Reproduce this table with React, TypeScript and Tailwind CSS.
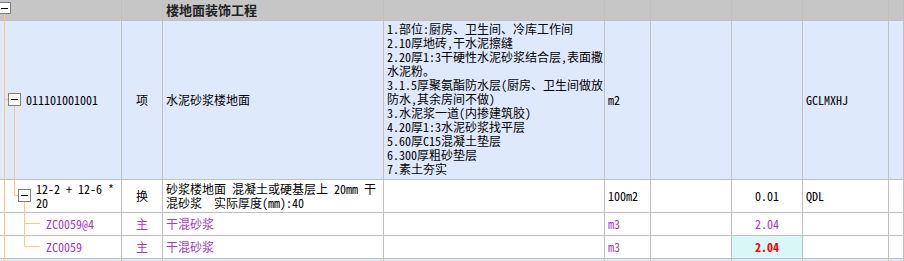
import React from "react";

const PURPLE = "text-[#a437c6]";

type CellProps = {
  children?: React.ReactNode;
  className?: string;
};

function Cell({ children, className = "" }: CellProps) {
  return (
    <div className={`flex items-center overflow-hidden whitespace-pre border-r border-b border-[#c0c0c0] ${className}`}>
      {children}
    </div>
  );
}

function Lines({ lines }: { lines: string[] }) {
  return (
    <div className="flex flex-col">
      {lines.map((l, i) => (
        <span key={i}>{l}</span>
      ))}
    </div>
  );
}

const description = [
  "1.部位:厨房、卫生间、冷库工作间",
  "2.10厚地砖,干水泥擦缝",
  "2.20厚1:3干硬性水泥砂浆结合层,表面撒",
  "水泥粉。",
  "3.1.5厚聚氨酯防水层(厨房、卫生间做放",
  "防水,其余房间不做)",
  "3.水泥浆一道(内掺建筑胶)",
  "4.20厚1:3水泥砂浆找平层",
  "5.60厚C15混凝土垫层",
  "6.300厚粗砂垫层",
  "7.素土夯实",
];

// tree connectors + collapse boxes in the code column
function TreeLines() {
  const line = "#ffc77d";
  return (
    <svg className="pointer-events-none absolute left-0 top-0" width="122" height="261">
      <g stroke={line} strokeWidth="1" fill="none">
        <path d="M4.5 14 V261" />
        <path d="M4 99.5 H8" />
        <path d="M14.5 106 V195.5 H18" />
        <path d="M24.5 202 V246.5 H40" />
        <path d="M24 223.5 H40" />
      </g>
      <g stroke="#808080" fill="#fff">
        <rect x="-1.5" y="2.5" width="12" height="11" />
        <rect x="8.5" y="93.5" width="12" height="12" />
        <rect x="18.5" y="189.5" width="12" height="12" />
      </g>
      <g stroke="#000" strokeWidth="1">
        <path d="M1 8.5 H8" />
        <path d="M11 99.5 H18" />
        <path d="M21 195.5 H28" />
      </g>
    </svg>
  );
}

export default function App() {
  return (
    <div className="relative h-[261px] w-[904px] overflow-hidden bg-white font-['Noto_Sans_Mono_CJK_SC','Noto_Sans_CJK_SC',sans-serif] text-[12px] leading-[14px] text-black">
      <div className="grid grid-cols-[122px_41px_221px_221px_46px_81px_71px_86px_1fr] grid-rows-[21px_159px_33px_23px_23px_10px]">
        {/* group header */}
        <Cell className="bg-[#c6c6c6] border-[#bdbdbd]" />
        <Cell className="bg-[#c6c6c6] border-[#bdbdbd]" />
        <Cell className="bg-[#c6c6c6] border-[#bdbdbd] pl-[3px] text-[13px] font-bold text-[#222]">楼地面装饰工程</Cell>
        <Cell className="bg-[#c6c6c6] border-[#bdbdbd]" />
        <Cell className="bg-[#c6c6c6] border-[#bdbdbd]" />
        <Cell className="bg-[#c6c6c6] border-[#bdbdbd]" />
        <Cell className="bg-[#c6c6c6] border-[#bdbdbd]" />
        <Cell className="bg-[#c6c6c6] border-[#bdbdbd]" />
        <Cell className="bg-[#c6c6c6] border-[#bdbdbd]" />

        {/* 清单 row */}
        <Cell className="bg-[#dee9fc] pl-[26px]">011101001001</Cell>
        <Cell className="bg-[#dee9fc] justify-center">项</Cell>
        <Cell className="bg-[#dee9fc] pl-[3px]">水泥砂浆楼地面</Cell>
        <Cell className="bg-[#dee9fc] items-start pl-[3px] pt-[1px]">
          <Lines lines={description} />
        </Cell>
        <Cell className="bg-[#dee9fc] pl-[3px]">m2</Cell>
        <Cell className="bg-[#dee9fc]" />
        <Cell className="bg-[#dee9fc]" />
        <Cell className="bg-[#dee9fc] pl-[3px]">GCLMXHJ</Cell>
        <Cell className="bg-[#dee9fc]" />

        {/* 定额 row */}
        <Cell className="pl-[36px]">
          <Lines lines={["12-2 + 12-6 *", "20"]} />
        </Cell>
        <Cell className="justify-center">换</Cell>
        <Cell className="pl-[3px]">
          <Lines lines={["砂浆楼地面 混凝土或硬基层上 20mm 干", "混砂浆  实际厚度(mm):40"]} />
        </Cell>
        <Cell />
        <Cell className="pl-[3px]">100m2</Cell>
        <Cell />
        <Cell className="justify-center">0.01</Cell>
        <Cell className="pl-[3px]">QDL</Cell>
        <Cell />

        {/* 主材 rows */}
        <Cell className={`pl-[46px] ${PURPLE}`}>ZC0059@4</Cell>
        <Cell className={`justify-center ${PURPLE}`}>主</Cell>
        <Cell className={`pl-[3px] ${PURPLE}`}>干混砂浆</Cell>
        <Cell />
        <Cell className={`pl-[3px] ${PURPLE}`}>m3</Cell>
        <Cell />
        <Cell className={`justify-center ${PURPLE}`}>2.04</Cell>
        <Cell />
        <Cell />

        <Cell className={`pl-[46px] ${PURPLE}`}>ZC0059</Cell>
        <Cell className={`justify-center ${PURPLE}`}>主</Cell>
        <Cell className={`pl-[3px] ${PURPLE}`}>干混砂浆</Cell>
        <Cell />
        <Cell className={`pl-[3px] ${PURPLE}`}>m3</Cell>
        <Cell />
        <Cell className="justify-center bg-[#d9f7f7] font-bold text-[#ff0000]">2.04</Cell>
        <Cell />
        <Cell />

        {/* next row, cut off */}
        <Cell className="bg-[#dee9fc]" />
        <Cell className="bg-[#dee9fc]" />
        <Cell className="bg-[#dee9fc]" />
        <Cell className="bg-[#dee9fc]" />
        <Cell className="bg-[#dee9fc]" />
        <Cell className="bg-[#dee9fc]" />
        <Cell className="bg-[#dee9fc]" />
        <Cell className="bg-[#dee9fc]" />
        <Cell className="bg-[#dee9fc]" />
      </div>
      <TreeLines />
    </div>
  );
}
